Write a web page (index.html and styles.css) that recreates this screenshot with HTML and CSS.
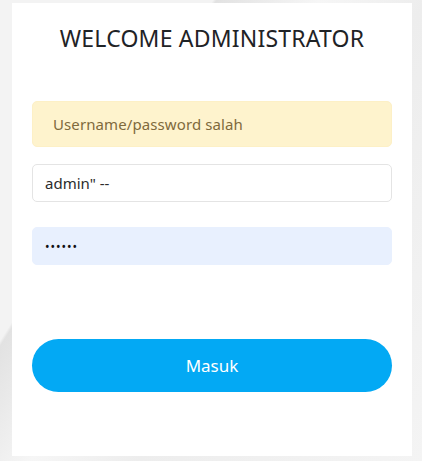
FILE: index.html
```html
<!DOCTYPE html>
<html lang="id">
<head>
<meta charset="utf-8">
<title>Login Administrator</title>
<link rel="stylesheet" href="styles.css">
</head>
<body>
<div class="page">
  <div class="card">
    <h1 class="title">WELCOME ADMINISTRATOR</h1>
    <div class="alert">Username/password salah</div>
    <form class="form">
      <input class="field" type="text" value="admin&quot; --">
      <input class="field field-filled" type="password" value="123456">
      <button class="btn" type="button">Masuk</button>
    </form>
  </div>
</div>
</body>
</html>
```
FILE: styles.css
```css
html, body {
  margin: 0;
  padding: 0;
  height: 100%;
}
body {
  font-family: "Noto Sans", "Open Sans", sans-serif;
  background-color: #ececec;
  background-image:
    linear-gradient(122deg, #f3f3f3 0%, #f3f3f3 30%, #e2e2e2 30.5%, #f6f6f6 45%, #ededed 60%, #f4f4f4 100%);
  overflow: hidden;
}
.page {
  padding: 3px 0 0 12px;
}
.card {
  width: 400px;
  height: 453px;
  background: #ffffff;
  box-sizing: border-box;
  padding: 20px 20px 0 20px;
  display: flex;
  flex-direction: column;
}
.title {
  margin: 0;
  font-weight: 400;
  font-size: 23px;
  line-height: 30px;
  text-align: center;
  color: #1f2326;
  letter-spacing: 0.2px;
}
.alert {
  margin-top: 48px;
  height: 46px;
  box-sizing: border-box;
  background: #fef3cd;
  border: 1px solid #fdf0c6;
  border-radius: 5px;
  color: #7f6a3c;
  font-size: 15px;
  line-height: 44px;
  padding-left: 20px;
  letter-spacing: 0.1px;
}
.form {
  display: flex;
  flex-direction: column;
  margin: 0;
}
.field {
  height: 38px;
  box-sizing: border-box;
  border: 1px solid #e4e4e4;
  border-radius: 5px;
  background: #ffffff;
  padding: 0 12px;
  font-family: "Noto Sans", "Open Sans", sans-serif;
  font-size: 15px;
  color: #2c2c2c;
  outline: none;
  margin-top: 17px;
}
.field-filled {
  margin-top: 25px;
  background: #e8f0fe;
  border-color: #e8f0fe;
  font-size: 12px;
  letter-spacing: 1px;
  color: #111;
}
.btn {
  margin-top: 74px;
  height: 53px;
  border: none;
  border-radius: 27px;
  background: #03a9f4;
  color: #ffffff;
  font-family: "Noto Sans", "Open Sans", sans-serif;
  font-size: 17px;
  cursor: pointer;
}
```
